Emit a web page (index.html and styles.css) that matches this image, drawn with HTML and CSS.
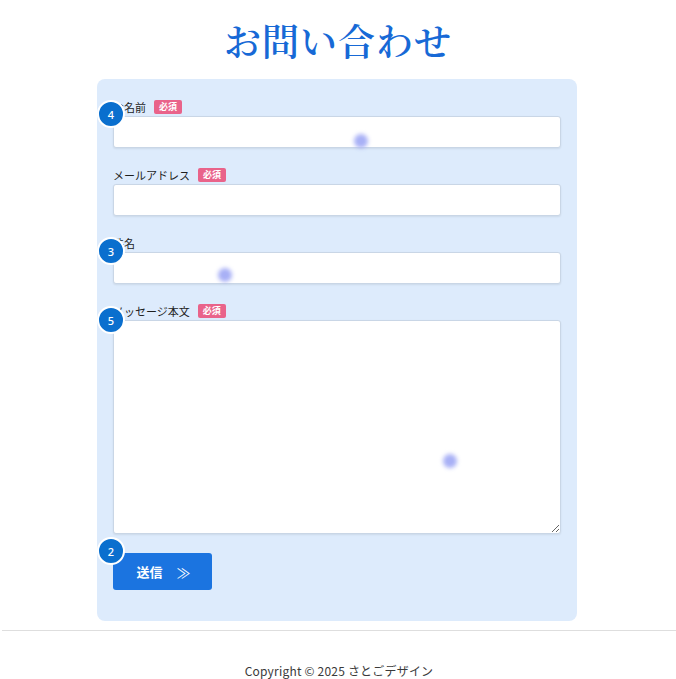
FILE: index.html
```html
<!DOCTYPE html>
<html lang="ja">
<head>
<meta charset="utf-8">
<title>お問い合わせ</title>
<link rel="stylesheet" href="styles.css">
</head>
<body>
<main class="page">
  <h1 class="title">お問い合わせ</h1>
  <form class="card">
    <div class="field">
      <label class="label">お名前 <span class="req">必須</span></label>
      <input class="input" type="text">
    </div>
    <div class="field">
      <label class="label">メールアドレス <span class="req">必須</span></label>
      <input class="input" type="email">
    </div>
    <div class="field">
      <label class="label">件名</label>
      <input class="input" type="text">
    </div>
    <div class="field">
      <label class="label">メッセージ本文 <span class="req">必須</span></label>
      <textarea class="textarea"></textarea>
    </div>
    <button class="submit" type="button"><span>送信</span><span class="arrow">≫</span></button>

    <span class="badge b4">4</span>
    <span class="badge b3">3</span>
    <span class="badge b5">5</span>
    <span class="badge b2">2</span>
    <span class="dot d1"></span>
    <span class="dot d2"></span>
    <span class="dot d3"></span>
  </form>
</main>
<footer class="footer">
  <p class="copy">Copyright © 2025 さとごデザイン</p>
</footer>
</body>
</html>
```

FILE: styles.css
```css
* { box-sizing: border-box; }
body {
  margin: 0;
  background: #ffffff;
  font-family: "Noto Sans CJK JP", "Noto Sans", sans-serif;
  color: #222;
}
.page {
  display: flex;
  flex-direction: column;
  align-items: center;
}
.title {
  margin: 14px 0 12px;
  font-size: 37px;
  line-height: 53px;
  font-weight: 600;
  color: #1769d6;
  letter-spacing: 1px;
  font-family: "Noto Serif CJK JP", "Noto Sans CJK JP", serif;
}
.card {
  position: relative;
  width: 480px;
  margin-right: 2px;
  background: #ddebfc;
  border-radius: 8px;
  padding: 20px 16px 31px 16px;
}
.field {
  display: flex;
  flex-direction: column;
  margin-bottom: 19px;
}
.label {
  display: flex;
  align-items: center;
  gap: 4px;
  height: 16px;
  font-size: 11px;
  line-height: 16px;
  color: #1e1e1e;
  margin-bottom: 1px;
}
.req {
  display: inline-block;
  background: #e9638a;
  color: #fff;
  font-size: 9px;
  font-weight: 700;
  line-height: 14px;
  padding: 0 5px;
  border-radius: 2px;
  margin-left: 4px;
}
.input, .textarea {
  width: 100%;
  background: #fff;
  border: 1px solid #c9d6e6;
  border-radius: 3px;
  box-shadow: 0 1px 2px rgba(0, 0, 0, 0.08);
  font: inherit;
}
.input { height: 32px; }
.textarea { height: 214px; resize: vertical; display: block; }
.submit {
  display: flex;
  align-items: center;
  justify-content: center;
  gap: 14px;
  width: 99px;
  height: 37px;
  border: none;
  border-radius: 3px;
  background: #1b74e0;
  color: #fff;
  font-family: "Noto Sans CJK JP", sans-serif;
  font-size: 13px;
  font-weight: 700;
  padding: 0 0 0 2px;
}
.arrow { font-size: 14px; font-weight: 400; }
.badge {
  position: absolute;
  left: 0;
  width: 28px;
  height: 28px;
  border-radius: 50%;
  background: #0a6fce;
  border: 2px solid #fff;
  color: #fff;
  font-family: "Noto Sans", sans-serif;
  font-size: 11px;
  font-weight: 500;
  display: flex;
  align-items: center;
  justify-content: center;
}
.b4 { top: 21px; }
.b3 { top: 158px; }
.b5 { top: 227px; }
.b2 { top: 458px; }
.dot {
  position: absolute;
  width: 14px;
  height: 14px;
  border-radius: 50%;
  background: #a8b0f6;
  filter: blur(2px);
}
.d1 { left: 257px; top: 55px; }
.d2 { left: 121px; top: 189px; }
.d3 { left: 346px; top: 375px; }
.footer {
  margin: 9px 0 0 2px;
  border-top: 1px solid #dedede;
  text-align: center;
}
.copy {
  margin: 0;
  padding-top: 30px;
  font-size: 12px;
  line-height: 20px;
  color: #3a3a3a;
  letter-spacing: 0.2px;
}
```
